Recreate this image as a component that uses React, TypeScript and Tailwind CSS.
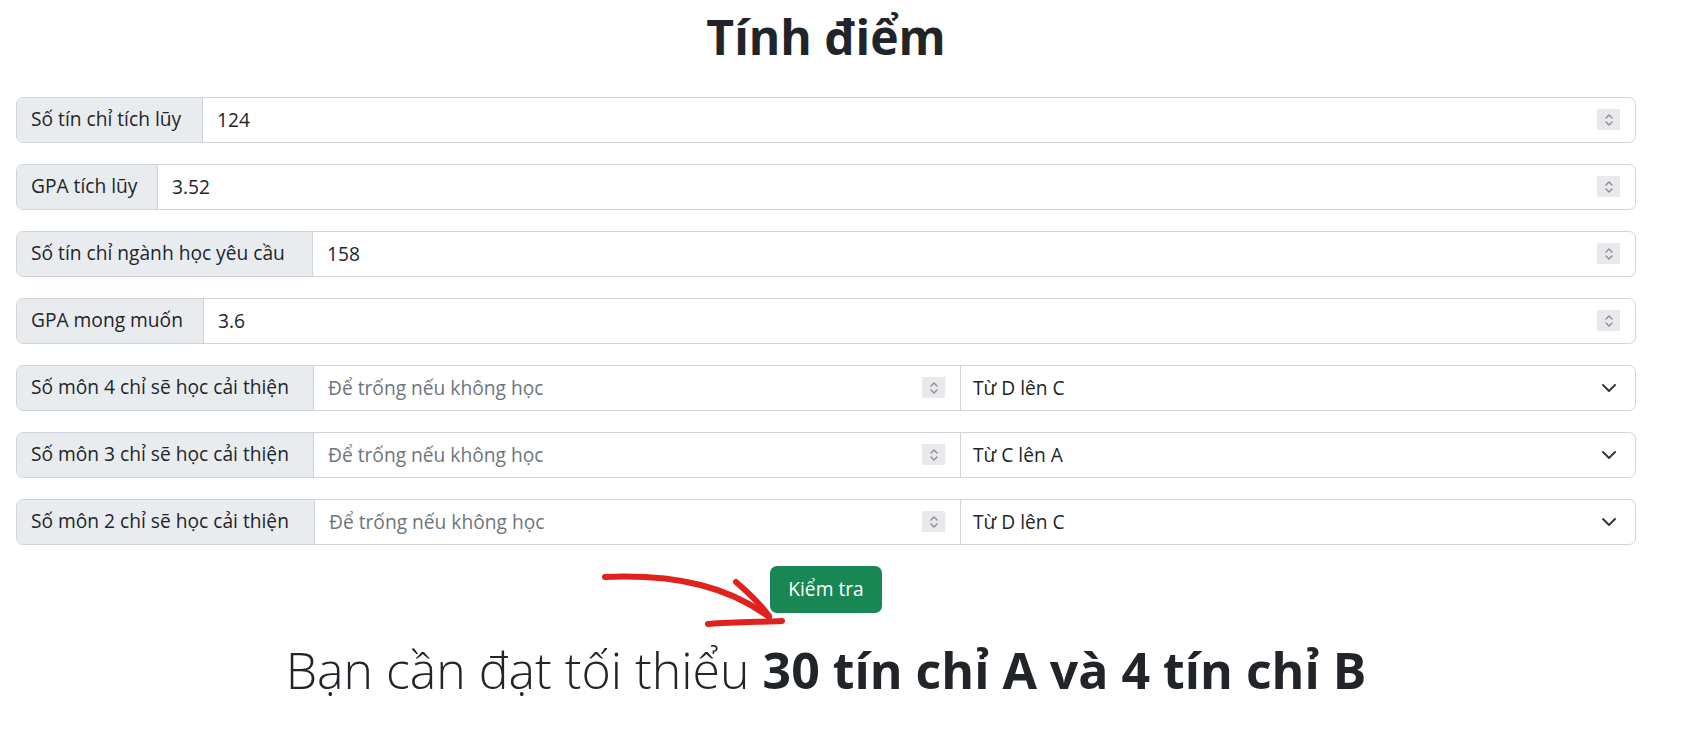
import { ChangeEvent, useState } from "react";

const font = { fontFamily: "'Open Sans', 'Noto Sans', sans-serif" };

function Spinner() {
  return (
    <div className="w-[23px] h-[21px] bg-[#e9e9ed] flex items-center justify-center shrink-0">
      <svg width="12" height="16" viewBox="0 0 12 16" fill="none" stroke="#8a8a8e" strokeWidth="1.3" strokeLinecap="round" strokeLinejoin="round">
        <path d="M3 6 L6 3 L9 6" />
        <path d="M3 10 L6 13 L9 10" />
      </svg>
    </div>
  );
}

function Chevron() {
  return (
    <svg width="16" height="16" viewBox="0 0 16 16" fill="none" stroke="#343a40" strokeWidth="2" strokeLinecap="round" strokeLinejoin="round">
      <path d="m2 5 6 6 6-6" />
    </svg>
  );
}

function Row({ label, width, value }: { label: string; width: string; value: string }) {
  return (
    <div className="flex h-[46px] border border-[#ced4da] rounded-[7px] overflow-hidden">
      <div className={"flex items-center px-[14px] bg-[#e9ecef] border-r border-[#ced4da] whitespace-nowrap shrink-0 " + width}>
        {label}
      </div>
      <div className="flex-1 flex items-center pl-[14px] pr-[15px]">
        <span className="flex-1 pt-[2px]">{value}</span>
        <Spinner />
      </div>
    </div>
  );
}

function ImproveRow({ label, width, grade }: { label: string; width: string; grade: string }) {
  const [sel, setSel] = useState(grade);
  return (
    <div className="flex h-[46px] border border-[#ced4da] rounded-[7px] overflow-hidden">
      <div className={"flex items-center px-[14px] bg-[#e9ecef] border-r border-[#ced4da] whitespace-nowrap shrink-0 " + width}>
        {label}
      </div>
      <div className="w-[647px] shrink-0 flex-1 flex items-center pl-[14px] pr-[15px] border-r border-[#ced4da]">
        <span className="flex-1 text-[#6c757d] pt-[2px]">Để trống nếu không học</span>
        <Spinner />
      </div>
      <label className="w-[674px] shrink-0 relative flex items-center pl-[12px] pr-[18px]">
        <span className="flex-1 pt-[2px]">{sel}</span>
        <Chevron />
        <select
          className="absolute inset-0 opacity-0"
          value={sel}
          onChange={(e: ChangeEvent<HTMLSelectElement>) => setSel(e.target.value)}
        >
          <option>Từ D lên C</option>
          <option>Từ C lên A</option>
          <option>Từ D lên A</option>
        </select>
      </label>
    </div>
  );
}

export default function App() {
  return (
    <div className="relative w-[1692px] h-[737px] bg-white text-[#212529] text-[19.2px] overflow-hidden" style={font}>
      <div className="pl-[16px] pr-[56px]">
        <h1 className="text-center font-bold text-[48px] leading-[57.6px] pt-[8px] mb-[31px]">Tính điểm</h1>
        <div className="flex flex-col gap-[21px]">
          <Row label="Số tín chỉ tích lũy" width="w-[186px]" value="124" />
          <Row label="GPA tích lũy" width="w-[141px]" value="3.52" />
          <Row label="Số tín chỉ ngành học yêu cầu" width="w-[296px]" value="158" />
          <Row label="GPA mong muốn" width="w-[187px]" value="3.6" />
          <ImproveRow label="Số môn 4 chỉ sẽ học cải thiện" width="w-[297px]" grade="Từ D lên C" />
          <ImproveRow label="Số môn 3 chỉ sẽ học cải thiện" width="w-[297px]" grade="Từ C lên A" />
          <ImproveRow label="Số môn 2 chỉ sẽ học cải thiện" width="w-[298px]" grade="Từ D lên C" />
        </div>
        <div className="flex justify-center mt-[21px]">
          <button className="w-[112px] h-[47px] bg-[#198754] text-white rounded-[7px]">Kiểm tra</button>
        </div>
        <p className="text-center text-[50px] leading-[60px] font-light mt-[27px]">
          Bạn cần đạt tối thiểu <b className="font-bold">30 tín chỉ A và 4 tín chỉ B</b>
        </p>
      </div>
      <svg className="absolute top-0 left-0 pointer-events-none" width="1692" height="737" viewBox="0 0 1692 737" fill="none" stroke="#e0221f" strokeWidth="6" strokeLinecap="round" strokeLinejoin="round">
        <path d="M605 577 C 680 574, 730 588, 769 617" />
        <path d="M736 582 C 750 594, 760 604, 769 616" />
        <path d="M708 624 C 735 622, 760 622, 782 621" />
      </svg>
    </div>
  );
}
